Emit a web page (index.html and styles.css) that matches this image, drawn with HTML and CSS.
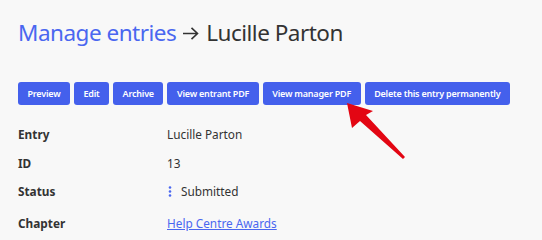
FILE: index.html
```html
<!DOCTYPE html>
<html>
<head>
<meta charset="utf-8">
<link rel="stylesheet" href="styles.css">
</head>
<body>
<main class="page">
  <h1 class="title"><a class="crumb" href="#">Manage entries</a><svg class="sep" width="17" height="13" viewBox="0 0 17 13"><path d="M1 6.5 H15.5 M9.5 0.8 L15.5 6.5 L9.5 12.2" fill="none" stroke="#333" stroke-width="1.6"/></svg>Lucille Parton</h1>
  <div class="actions">
    <button class="btn">Preview</button>
    <button class="btn">Edit</button>
    <button class="btn">Archive</button>
    <button class="btn">View entrant PDF</button>
    <button class="btn">View manager PDF</button>
    <button class="btn">Delete this entry permanently</button>
  </div>
  <dl class="details">
    <dt>Entry</dt><dd>Lucille Parton</dd>
    <dt>ID</dt><dd>13</dd>
    <dt>Status</dt><dd class="status"><svg class="dots" width="4" height="11" viewBox="0 0 4 11"><circle cx="2" cy="1.5" r="1.3"/><circle cx="2" cy="5.5" r="1.3"/><circle cx="2" cy="9.5" r="1.3"/></svg><span>Submitted</span></dd>
    <dt>Chapter</dt><dd><a class="link" href="#">Help Centre Awards</a></dd>
  </dl>
  <svg class="pointer" width="70" height="64" viewBox="0 0 70 64">
    <path d="M1 1 L27 9 L20 13 L59 55 L57 57 L14 19 L6 26 Z" fill="#e30613"/>
  </svg>
</main>
</body>
</html>
```

FILE: styles.css
```css
html, body { margin: 0; padding: 0; background: #f8f8f8; }
body { font-family: "Noto Sans", "Open Sans", sans-serif; color: #333; }
.page { position: relative; padding: 13px 18px 0 18px; }
.title { margin: 0; font-weight: 400; font-size: 22.5px; line-height: 40px; color: #333; letter-spacing: -0.5px; display: flex; align-items: center; }
.crumb { color: #4a67f0; text-decoration: none; }
.sep { margin: 1px 7px 0 6px; flex: none; }
.actions { display: flex; gap: 4px; margin-top: 29px; }
.btn { flex: none; white-space: nowrap; font-family: inherit; font-size: 9px; font-weight: 600; letter-spacing: -0.2px; color: #fff; background: #4460ec; border: none; border-radius: 3px; height: 23px; padding: 0 9.5px; }
.details { display: grid; grid-template-columns: 149px auto; margin: 15px 0 0 0; font-size: 11.8px; row-gap: 0; }
.details dt { font-weight: 700; margin: 0; line-height: 28px; }
.details dd { margin: 0; line-height: 28px; }
.details dt:nth-of-type(2), .details dd:nth-of-type(2) { line-height: 30px; }
.details dt:nth-of-type(3), .details dd:nth-of-type(3) { line-height: 26px; }
.details dt:nth-of-type(4), .details dd:nth-of-type(4) { line-height: 38px; }
.status { display: flex; align-items: center; gap: 9px; }
.dots { fill: #4a67f0; margin-left: 1px; }
.link { color: #4a67f0; }
.pointer { position: absolute; left: 346px; top: 102px; }
```
